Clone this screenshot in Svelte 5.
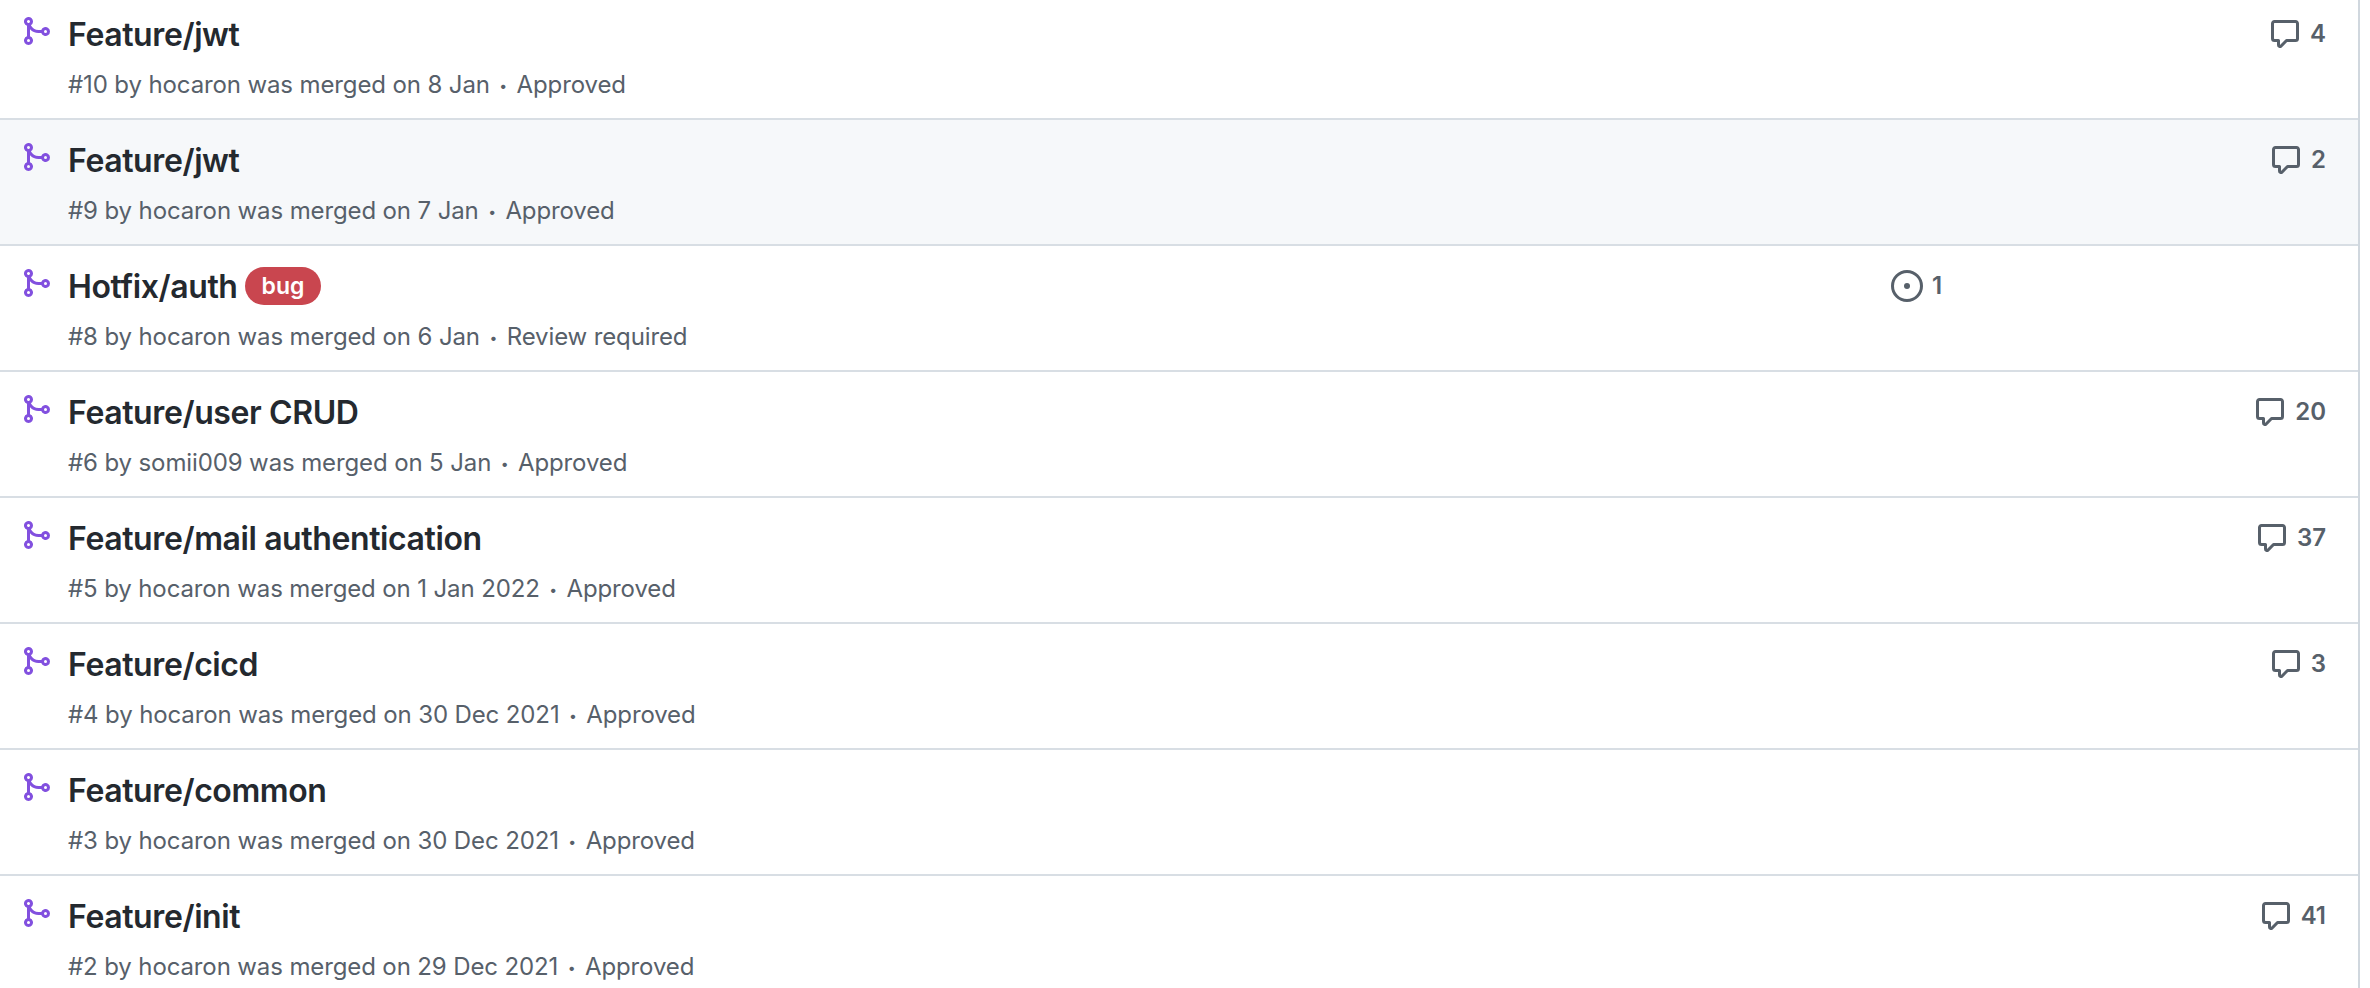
<script lang="ts">
	const merge =
		'M5.45 5.154A4.25 4.25 0 0 0 9.25 7.5h1.378a2.251 2.251 0 1 1 0 1.5H9.25A5.734 5.734 0 0 1 5 7.123v3.505a2.25 2.25 0 1 1-1.5 0V5.372a2.25 2.25 0 1 1 1.95-.218ZM4.25 13.5a.75.75 0 1 0 0-1.5.75.75 0 0 0 0 1.5Zm8.5-4.5a.75.75 0 1 0 0-1.5.75.75 0 0 0 0 1.5ZM5 3.25a.75.75 0 1 0 0 .005V3.25Z';
	const comment =
		'M1 2.75C1 1.784 1.784 1 2.75 1h10.5c.966 0 1.75.784 1.75 1.75v7.5A1.75 1.75 0 0 1 13.25 12H9.06l-2.573 2.573A1.458 1.458 0 0 1 4 13.543V12H2.75A1.75 1.75 0 0 1 1 10.25Zm1.75-.25a.25.25 0 0 0-.25.25v7.5c0 .138.112.25.25.25h2a.75.75 0 0 1 .75.75v2.19l2.72-2.72a.749.749 0 0 1 .53-.22h4.5a.25.25 0 0 0 .25-.25v-7.5a.25.25 0 0 0-.25-.25Z';

	const rows = [
		{ title: 'Feature/jwt', num: 10, author: 'hocaron', date: '8 Jan', review: 'Approved', comments: 4 },
		{ title: 'Feature/jwt', num: 9, author: 'hocaron', date: '7 Jan', review: 'Approved', comments: 2, hover: true },
		{ title: 'Hotfix/auth', num: 8, author: 'hocaron', date: '6 Jan', review: 'Review required', label: 'bug', issues: 1 },
		{ title: 'Feature/user CRUD', num: 6, author: 'somii009', date: '5 Jan', review: 'Approved', comments: 20 },
		{ title: 'Feature/mail authentication', num: 5, author: 'hocaron', date: '1 Jan 2022', review: 'Approved', comments: 37 },
		{ title: 'Feature/cicd', num: 4, author: 'hocaron', date: '30 Dec 2021', review: 'Approved', comments: 3 },
		{ title: 'Feature/common', num: 3, author: 'hocaron', date: '30 Dec 2021', review: 'Approved' },
		{ title: 'Feature/init', num: 2, author: 'hocaron', date: '29 Dec 2021', review: 'Approved', comments: 41 }
	];
</script>

<main class="list">
	{#each rows as row}
		<div class="row" class:hover={row.hover}>
			<svg class="merge" viewBox="0 0 16 16" aria-hidden="true"><path d={merge} /></svg>
			<div class="main">
				<div class="title">
					<a href="#top">{row.title}</a>
					{#if row.label}<span class="label">{row.label}</span>{/if}
				</div>
				<div class="meta">
					#{row.num} by {row.author} was merged on {row.date}<span class="dot">•</span>{row.review}
				</div>
			</div>
			<div class="issues">
				{#if row.issues}
					<svg viewBox="0 0 16 16" aria-hidden="true">
						<circle cx="8" cy="8" r="7.25" fill="none" stroke="currentColor" stroke-width="1.5" />
						<circle cx="8" cy="8" r="1.5" fill="currentColor" />
					</svg>
					<span>{row.issues}</span>
				{/if}
			</div>
			<div class="comments">
				{#if row.comments}
					<svg viewBox="0 0 16 16" aria-hidden="true"><path d={comment} /></svg>
					<span>{row.comments}</span>
				{/if}
			</div>
		</div>
	{/each}
</main>

<style>
	:global(body) {
		background: #ffffff;
		overflow: hidden;
	}

	.list {
		width: 2358px;
		height: 988px;
		overflow: hidden;
		border-right: 2px solid #d0d7de;
		font-family: Inter, 'Liberation Sans', sans-serif;
	}

	.row {
		display: flex;
		box-sizing: border-box;
		height: 126px;
		border-bottom: 2px solid #d8dee4;
		padding-left: 20px;
	}

	.row:first-child {
		height: 120px;
	}

	.row:first-child .merge {
		margin-top: 15px;
	}

	.row:first-child .main {
		padding-top: 14px;
	}

	.row:first-child .issues,
	.row:first-child .comments {
		padding-top: 18px;
	}

	.hover {
		background: #f6f8fa;
	}

	.merge {
		flex: none;
		width: 32px;
		height: 32px;
		margin-top: 21px;
		fill: #8250df;
	}

	.main {
		flex: 1;
		min-width: 0;
		padding: 20px 0 0 16px;
	}

	.title {
		display: flex;
		align-items: center;
		height: 40px;
		gap: 7px;
	}

	.title a {
		color: #24292f;
		font-size: 32px;
		font-weight: 600;
		letter-spacing: -0.4px;
		text-decoration: none;
	}

	.label {
		border-radius: 20px;
		background: #c9464f;
		padding: 4px 17px;
		color: #ffffff;
		font-size: 23px;
		font-weight: 600;
		line-height: 30px;
	}

	.meta {
		margin-top: 16px;
		color: #57606a;
		font-size: 24px;
		letter-spacing: -0.12px;
		line-height: 30px;
	}

	.dot {
		margin: 0 9.5px;
		font-size: 14px;
		vertical-align: 2px;
	}

	.issues,
	.comments {
		display: flex;
		align-items: center;
		gap: 9px;
		align-self: flex-start;
		padding-top: 24px;
		color: #57606a;
		font-size: 24px;
		font-weight: 600;
		line-height: 28px;
	}

	.issues {
		width: 347px;
	}

	.comments {
		justify-content: flex-end;
		width: 120px;
		padding-right: 32px;
		box-sizing: border-box;
	}

	.issues svg,
	.comments svg {
		flex: none;
		width: 32px;
		height: 32px;
		fill: currentColor;
	}
</style>
